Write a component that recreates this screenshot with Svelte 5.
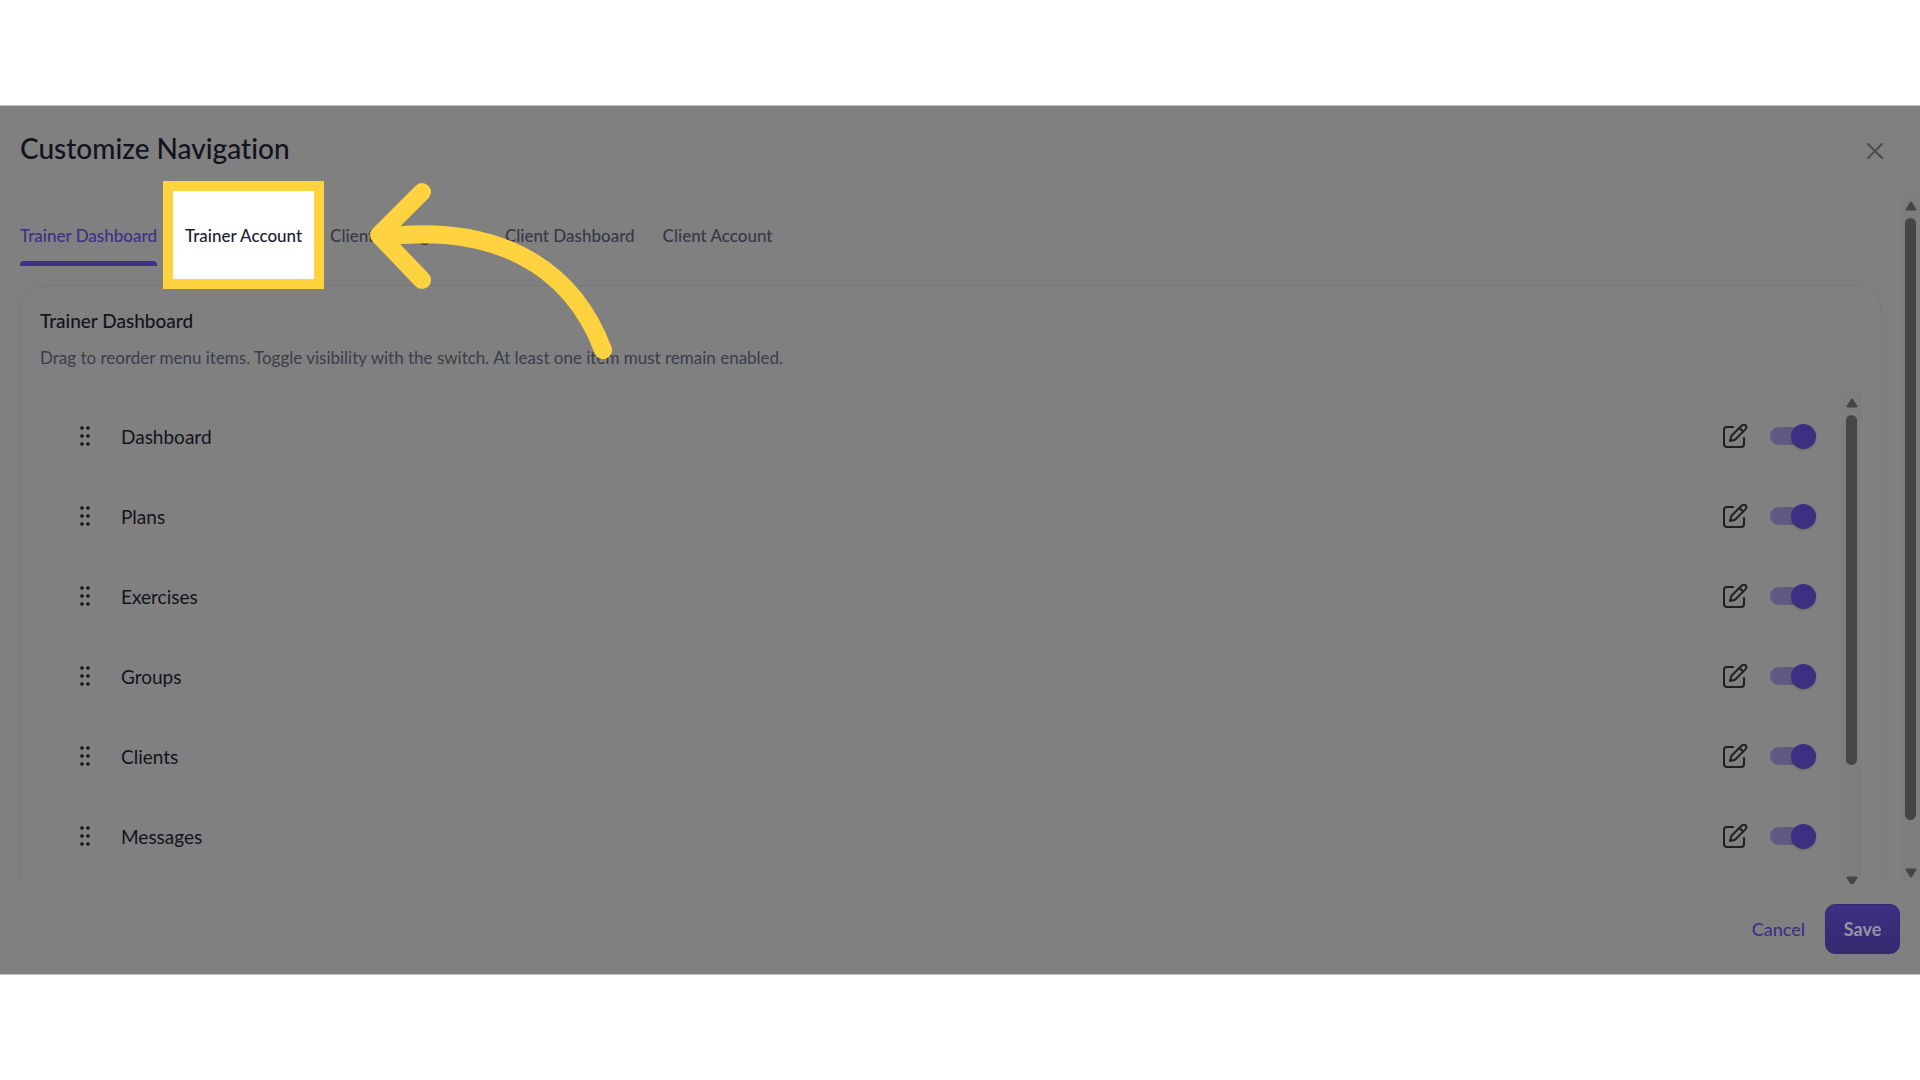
<script lang="ts">
	interface NavItem {
		id: string;
		label: string;
		enabled: boolean;
	}

	const tabs = [
		'Trainer Dashboard',
		'Trainer Account',
		'Client Management',
		'Client Dashboard',
		'Client Account'
	];
	const spotlightTab = 'Trainer Account';

	let activeTab = $state('Trainer Dashboard');
	let items = $state<NavItem[]>([
		{ id: 'dashboard', label: 'Dashboard', enabled: true },
		{ id: 'plans', label: 'Plans', enabled: true },
		{ id: 'exercises', label: 'Exercises', enabled: true },
		{ id: 'groups', label: 'Groups', enabled: true },
		{ id: 'clients', label: 'Clients', enabled: true },
		{ id: 'messages', label: 'Messages', enabled: true }
	]);
</script>

{#snippet scrollbar(kind: string)}
	<div class="scrollbar {kind}" aria-hidden="true">
		<svg class="cap" viewBox="0 0 12 10"><path d="M6 1.5 10.5 8.5H1.5Z" /></svg>
		<div class="thumb"></div>
		<svg class="cap end" viewBox="0 0 12 10"><path d="M6 8.5 10.5 1.5H1.5Z" /></svg>
	</div>
{/snippet}

<main class="dialog">
	<header class="header">
		<h1>Customize Navigation</h1>
		<button class="close" type="button" aria-label="Close">
			<svg viewBox="0 0 16 16"><path d="M1 1 15 15M15 1 1 15" /></svg>
		</button>
	</header>

	<div class="body">
		<div class="content">
			<nav class="tabs">
				{#each tabs as tab}
					<button
						class="tab"
						class:active={tab === activeTab}
						class:spotlight={tab === spotlightTab}
						type="button"
						onclick={() => (activeTab = tab)}
					>
						<span>{tab}</span>
					</button>
				{/each}
				<svg class="pointer" viewBox="360 170 260 200" aria-hidden="true">
					<path d="M422 192 379 235 422 280M381 237C490 223 570 262 603 350" />
				</svg>
			</nav>

			<section class="card">
				<h2>{activeTab}</h2>
				<p>Drag to reorder menu items. Toggle visibility with the switch. At least one item must remain enabled.</p>

				<div class="list-wrap">
					<ul class="list">
						{#each items as item (item.id)}
							<li class="row">
								<svg class="grip" viewBox="0 0 12 20" aria-hidden="true">
									{#each [2, 10, 18] as cy}
										<circle cx="3" {cy} r="1.8" />
										<circle cx="9" {cy} r="1.8" />
									{/each}
								</svg>
								<label for="toggle-{item.id}">{item.label}</label>
								<button class="edit" type="button" aria-label="Edit {item.label}">
									<svg viewBox="0 0 26 26">
										<path d="M11 4H5Q2 4 2 7V21Q2 24 5 24H19Q22 24 22 21V15" />
										<path d="M8 18 9.300 13 19.600 2.700Q21.600 .8 23.600 2.400 25.300 4.400 23.400 6.400L13 16.700Z" />
										<path d="M17.500 5 21 8.600" />
									</svg>
								</button>
								<input id="toggle-{item.id}" class="toggle" type="checkbox" role="switch" bind:checked={item.enabled} />
							</li>
						{/each}
					</ul>
					{@render scrollbar('inner')}
				</div>
			</section>
		</div>
		{@render scrollbar('outer')}
	</div>

	<footer class="footer">
		<button class="cancel" type="button">Cancel</button>
		<button class="save" type="button">Save</button>
	</footer>
</main>

<style>
	:global(body) {
		margin: 0;
		background: #fff;
	}

	.dialog {
		display: flex;
		flex-direction: column;
		box-sizing: border-box;
		height: calc(100vh - 210px);
		margin: 105px 0;
		border: solid #bfbfbf;
		border-width: 1px 0;
		background: #808080;
		color: #12131c;
		font-family: Lato, 'Open Sans', sans-serif;
		font-size: 17px;
		font-variant-ligatures: none;
		overflow: hidden;
	}

	button {
		padding: 0;
		border: none;
		background: none;
		font: inherit;
		cursor: pointer;
	}

	.header {
		display: flex;
		flex: none;
		align-items: center;
		justify-content: space-between;
		height: 89px;
		padding: 0 37px 0 20px;
	}

	h1 {
		margin: 0 0 6px;
		font-size: 28px;
		font-weight: 500;
	}

	.close {
		width: 16px;
		height: 16px;
	}

	.close svg {
		display: block;
		fill: none;
		stroke: #4b4b4b;
		stroke-width: 2;
		stroke-linecap: round;
	}

	/* clipped at the footer, but the walkthrough frame may rise over the header */
	.body {
		display: flex;
		flex: 1;
		min-height: 0;
		clip-path: inset(-40px 0 0);
	}

	.content {
		flex: 1;
		padding: 5px 20px 0;
	}

	.tabs {
		position: relative;
		display: flex;
		gap: 28px;
		height: 66px;
	}

	.tab {
		position: relative;
		padding-top: 4px;
		color: #363945;
		font-weight: 500;
	}

	.tab.active {
		color: #3d3087;
	}

	.tab.active::after {
		content: '';
		position: absolute;
		inset: auto 0 0;
		height: 5px;
		border-radius: 4px 4px 0 0;
		background: #3d3087;
	}

	.tab.spotlight {
		color: #1b1e30;
	}

	.tab span {
		position: relative;
	}

	/* walkthrough frame around the highlighted tab */
	.tab.spotlight::before {
		content: '';
		position: absolute;
		inset: -19px -22px -23px;
		box-sizing: border-box;
		border: 10px solid #ffd23f;
		background: #fff;
	}

	.pointer {
		position: absolute;
		top: -30px;
		left: 340px;
		width: 260px;
		height: 200px;
		fill: none;
		stroke: #ffd23f;
		stroke-width: 18;
		stroke-linecap: round;
		stroke-linejoin: round;
		pointer-events: none;
	}

	.card {
		height: 800px;
		margin: 19px -1px 0;
		padding: 20px;
		border: 1px solid #797979;
		border-radius: 27px;
		box-shadow: 0 0 16px rgba(0, 0, 0, 0.02);
	}

	h2 {
		margin: 0;
		font-size: 19px;
		font-weight: 500;
		line-height: 30px;
	}

	p {
		margin: 10px 0 22px;
		color: #3a3d4b;
		line-height: 24px;
	}

	.list-wrap {
		display: flex;
		height: 500px;
	}

	.list {
		flex: 1;
		margin: 0;
		padding: 4px 26px 0 39px;
		list-style: none;
		overflow: hidden;
	}

	.row {
		display: flex;
		align-items: center;
		height: 80px;
		font-size: 19px;
	}

	.grip {
		width: 12px;
		height: 20px;
		fill: #12131c;
	}

	.row label {
		flex: 1;
		margin-left: 30px;
	}

	.edit {
		width: 26px;
		height: 26px;
		margin-right: 22px;
	}

	.edit svg {
		display: block;
		fill: none;
		stroke: #1c1f23;
		stroke-width: 2;
		stroke-linecap: round;
		stroke-linejoin: round;
	}

	.toggle {
		display: flex;
		align-items: center;
		appearance: none;
		width: 46px;
		height: 18px;
		margin: 0;
		border-radius: 9px;
		background: #6d6d6d;
		cursor: pointer;
	}

	.toggle::before {
		content: '';
		width: 25px;
		height: 25px;
		flex: none;
		border-radius: 50%;
		background: #555;
		box-shadow: 0 1px 2px rgba(0, 0, 0, 0.2);
	}

	.toggle:checked {
		justify-content: flex-end;
		background: #605a82;
	}

	.toggle:checked::before {
		background: #3d3082;
	}

	.scrollbar {
		display: flex;
		flex-direction: column;
		flex: none;
		align-items: center;
		gap: 7px;
		box-sizing: border-box;
		width: 19px;
		padding: 6px 0;
		background: #7e7e7e;
	}

	.thumb {
		width: 11px;
		border-radius: 6px;
		background: #464646;
	}

	.inner .thumb {
		height: 350px;
	}

	.outer {
		height: 100%;
	}

	.outer .thumb {
		height: 602px;
	}

	.cap {
		width: 12px;
		height: 10px;
		fill: #464646;
		stroke: #464646;
		stroke-width: 2;
		stroke-linejoin: round;
	}

	.cap.end {
		margin-top: auto;
	}

	.footer {
		display: flex;
		flex: none;
		align-items: center;
		justify-content: flex-end;
		gap: 20px;
		height: 90px;
		padding-right: 20px;
		font-size: 18px;
		font-weight: 500;
	}

	.cancel {
		color: #3d3087;
	}

	.save {
		width: 75px;
		height: 50px;
		border: 1px solid #352a72;
		border-radius: 10px;
		background: linear-gradient(#3d3084, #35296e);
		color: #9594a6;
		font-weight: 700;
	}
</style>
